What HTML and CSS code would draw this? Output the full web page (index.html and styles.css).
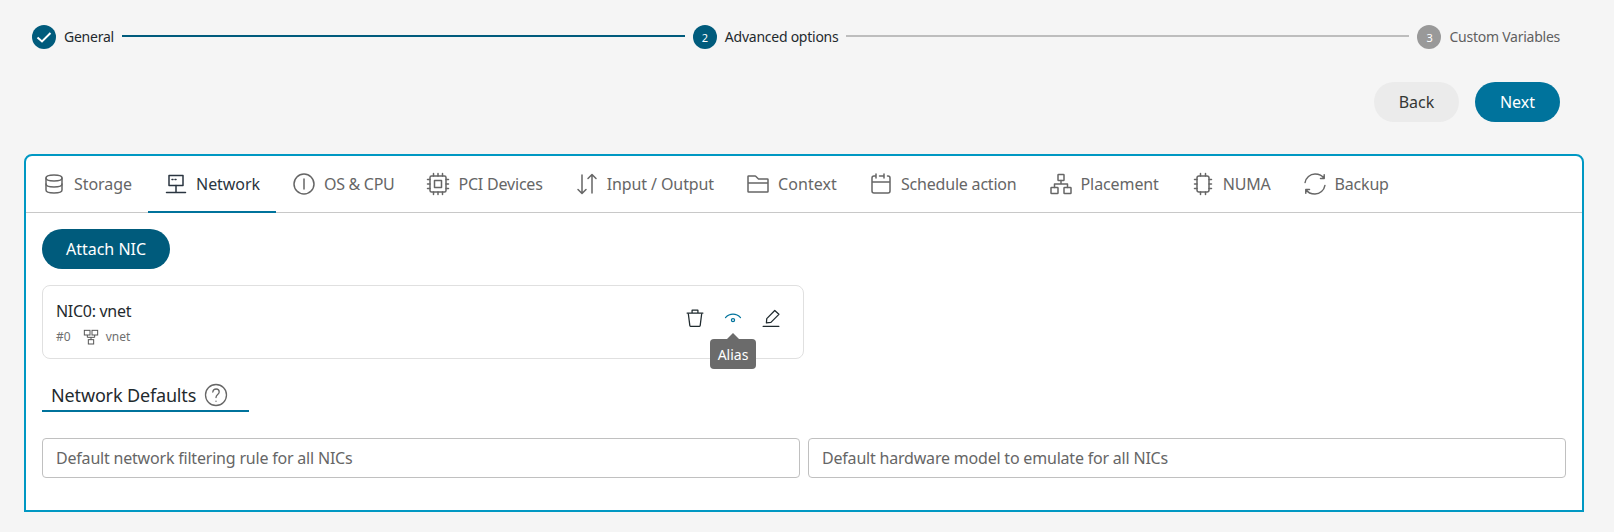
FILE: index.html
```html
<!DOCTYPE html>
<html lang="en">
<head>
<meta charset="utf-8">
<title>VM Template</title>
<link rel="stylesheet" href="styles.css">
</head>
<body>
<main class="page">
  <div class="stepper">
    <div class="step">
      <span class="step-dot"><svg viewBox="0 0 24 24" class="check"><path d="M5.500 12.500l4.500 4 8.500-8.500"/></svg></span>
      <span class="step-label">General</span>
    </div>
    <span class="step-line done"></span>
    <div class="step">
      <span class="step-dot">2</span>
      <span class="step-label">Advanced options</span>
    </div>
    <span class="step-line"></span>
    <div class="step off">
      <span class="step-dot">3</span>
      <span class="step-label">Custom Variables</span>
    </div>
  </div>

  <div class="actions">
    <button class="btn btn-back">Back</button>
    <button class="btn btn-next">Next</button>
  </div>

  <section class="panel">
    <nav class="tabs">
      <a class="tab ls-wide">
        <svg class="ico" viewBox="0 0 24 24"><path d="M4 6v12c0 2.200 3.600 3 8 3s8-.8 8-3V6"/><path d="M4 6c0-2.200 3.600-3 8-3s8 .8 8 3-3.600 3-8 3-8-.8-8-3z"/><path d="M4 12c0 2.200 3.600 3 8 3s8-.8 8-3"/></svg>
        <span>Storage</span>
      </a>
      <a class="tab active ls-wide">
        <svg class="ico" viewBox="0 0 24 24"><path d="M5 3.500h14v10H5z"/><path d="M12 13.500V20M2.500 20.500h19"/><path d="M8 7.500h1M11 7.500h1"/></svg>
        <span>Network</span>
      </a>
      <a class="tab ls-tight">
        <svg class="ico" viewBox="0 0 24 24"><circle cx="12" cy="12" r="10"/><path d="M12 7v10"/></svg>
        <span>OS &amp; CPU</span>
      </a>
      <a class="tab">
        <svg class="ico" viewBox="0 0 24 24"><rect x="4" y="4" width="16" height="16" rx="1.500"/><rect x="8.500" y="8.500" width="7" height="7"/><path d="M1.500 7.500H4M1.500 12H4M1.500 16.500H4M20 7.500h2.500M20 12h2.500M20 16.500h2.500M7.500 1.500V4M12 1.500V4M16.500 1.500V4M7.500 20v2.500M12 20v2.500M16.500 20v2.500"/></svg>
        <span>PCI Devices</span>
      </a>
      <a class="tab ls-mid">
        <svg class="ico" viewBox="0 0 24 24"><path d="M7 3v18M3 17.500l4 4 4-4"/><path d="M17 21V3M13 6.500l4-4 4 4"/></svg>
        <span>Input / Output</span>
      </a>
      <a class="tab ls-wider">
        <svg class="ico" viewBox="0 0 24 24"><path d="M2 11V4.600c0-.3.3-.6.600-.6h6.700c.2 0 .3.100.4.200L12.500 7h8.900c.3 0 .6.300.6.600V11M2 11v8.400c0 .3.300.6.600.6h18.800c.3 0 .6-.3.600-.6V11M2 11h20"/></svg>
        <span>Context</span>
      </a>
      <a class="tab">
        <svg class="ico" viewBox="0 0 24 24"><path d="M15 4V2m0 2v2m0-2h-4.500M3 10v9a2 2 0 002 2h14a2 2 0 002-2v-9H3zM3 10V6a2 2 0 012-2h2M7 2v4M21 10V6a2 2 0 00-2-2h-.5"/></svg>
        <span>Schedule action</span>
      </a>
      <a class="tab ls-mid">
        <svg class="ico" viewBox="0 0 24 24"><rect x="9" y="2.500" width="6" height="6" rx=".6"/><rect x="2" y="15.500" width="7" height="6" rx=".6"/><rect x="15" y="15.500" width="7" height="6" rx=".6"/><path d="M12 8.500V12M5.500 15.500V12h13v3.500"/></svg>
        <span>Placement</span>
      </a>
      <a class="tab">
        <svg class="ico" viewBox="0 0 24 24"><rect x="6" y="4" width="12" height="16" rx="2"/><path d="M3.500 7.500H6M3.500 12H6M3.500 16.500H6M18 7.500h2.500M18 12h2.500M18 16.500h2.500M9.500 1.500V4M14.500 1.500V4M9.500 20v2.500M14.500 20v2.500"/></svg>
        <span>NUMA</span>
      </a>
      <a class="tab">
        <svg class="ico" viewBox="0 0 24 24"><path d="M21.200 6.500V2.800M21.200 6.500h-3.700M21.200 6.500C19.400 3.800 15.900 2 12 2 7 2 2.900 5.700 2.100 10.500"/><path d="M2.800 17.500v3.700M2.800 17.500h3.700M2.800 17.500C4.600 20.200 8.100 22 12 22c5 0 9.100-3.700 9.900-8.500"/></svg>
        <span>Backup</span>
      </a>
    </nav>

    <div class="content">
      <button class="btn btn-attach">Attach NIC</button>

      <article class="card">
        <div class="card-info">
          <div class="card-title">NIC0: vnet</div>
          <div class="card-meta">
            <span class="meta-id">#0</span>
            <svg class="ico-small" viewBox="0 0 24 24"><rect x="2" y="2" width="8.500" height="7"/><rect x="13.500" y="2" width="8.500" height="7"/><rect x="8" y="16" width="8" height="6.500"/><path d="M6.500 9v3.500h11V9M12 12.500V16"/></svg>
            <span>vnet</span>
          </div>
        </div>
        <div class="card-actions">
          <button class="icon-btn"><svg viewBox="0 0 24 24"><path d="M4 7l1.800 14.100c0 .5.400.9.900.9h10.600c.5 0 .9-.4.900-.9L20 7"/><path d="M2.500 6h19M8.500 6V2.700c0-.1.100-.2.200-.2h6.600c.1 0 .2.100.2.200V6"/></svg></button>
          <button class="icon-btn teal"><svg viewBox="0 0 24 24"><path d="M3 11.500C5.500 8.700 8.500 7.300 12 7.300s6.500 1.400 9 4.200"/><circle cx="12" cy="14.500" r="1.900"/></svg></button>
          <button class="icon-btn"><svg viewBox="0 0 24 24"><path d="M2.500 22h19"/><path d="M6.500 17.800l.4-5L16.500 3l5 4.600-9.600 9.700z"/></svg></button>
          <div class="tooltip">Alias</div>
        </div>
      </article>

      <h2 class="section-title"><span>Network Defaults</span><svg class="help" viewBox="0 0 24 24"><circle cx="12" cy="12" r="10.500"/><path d="M8.800 9c.5-4 6.400-4 6.400 0 0 2.600-3.200 2.600-3.200 5.500"/><path d="M12 18.200v.1"/></svg></h2>

      <div class="fields">
        <input class="field" placeholder="Default network filtering rule for all NICs">
        <input class="field" placeholder="Default hardware model to emulate for all NICs">
      </div>
    </div>
  </section>
</main>
</body>
</html>
```
FILE: styles.css
```css
* { box-sizing: border-box; }
html, body { margin: 0; height: 100%; }
body {
  background: #f5f5f5;
  color: #353735;
  font-family: "Noto Sans", "Open Sans", sans-serif;
  overflow: hidden;
}
.page { padding: 25px 30px 0 24px; }

.stepper { display: flex; align-items: center; padding: 0 0 0 8px; height: 24px; margin-right: 24px; }
.step { display: flex; align-items: center; gap: 8px; font-size: 14px; letter-spacing: -.25px; color: #1f2a2e; }
.step.off { color: #5f6060; }
.step-label { margin-bottom: 2px; }
.step-dot {
  width: 24px; height: 24px; border-radius: 50%;
  background: #005b7c; color: #fff;
  display: flex; align-items: center; justify-content: center;
  font-size: 11px;
}
.step.off .step-dot { background: #999; }
.check { width: 24px; height: 24px; fill: none; stroke: #fff; stroke-width: 2; }
.step-line { flex: 1; height: 2px; background: #bdbdbd; margin: 0 8px 2px; }
.step-line.done { background: #005b7c; }

.actions { display: flex; justify-content: flex-end; gap: 16px; margin-top: 33px; margin-right: 24px; }
.btn { border: 0; border-radius: 20px; height: 40px; font: inherit; font-size: 16px; padding: 0; }
.btn-back { width: 85px; background: #ebebeb; color: #353735; }
.btn-next { width: 85px; background: #00739c; color: #fff; }

.panel {
  margin-top: 32px;
  height: 358px;
  background: #fff;
  border: 2px solid #0098c3;
  border-radius: 8px 8px 0 0;
}
.tabs { display: flex; height: 57px; border-bottom: 1px solid #c8c8c8; }
.tab {
  display: flex; align-items: center; gap: 8px;
  padding: 0 16px 1px; height: 56px;
  font-size: 16px; letter-spacing: -.2px; color: #666;
  position: relative;
}
.tab.ls-wide { letter-spacing: -.05px; }
.tab.ls-wider { letter-spacing: .08px; }
.tab.ls-mid { letter-spacing: -.1px; }
.tab.ls-tight { letter-spacing: -.3px; }
.tab.active { color: #2a3540; }
.tab.active::after {
  content: ""; position: absolute; left: 0; right: 0; bottom: -1px; height: 2px; background: #00739c;
}
.ico { width: 24px; height: 24px; flex: none; fill: none; stroke: currentColor; stroke-width: 1.500; stroke-linecap: round; stroke-linejoin: round; }

.content { padding: 16px 16px 0; }
.btn-attach { width: 128px; background: #005b7c; color: #fff; display: block; }

.card {
  margin-top: 16px; width: 762px; height: 74px;
  border: 1px solid #e0e0e0; border-radius: 8px;
  display: flex; justify-content: space-between;
  padding: 13px 12px 0 13px;
}
.card-title { font-size: 16px; letter-spacing: -.3px; color: #1f2a2e; line-height: 24px; }
.card-meta { display: flex; align-items: center; gap: 7px; font-size: 12px; color: #6f6f6f; margin-top: 5px; line-height: 18px; }
.meta-id { margin-right: 5px; }
.ico-small { width: 16px; height: 16px; fill: none; stroke: #555; stroke-width: 1.500; }
.card-actions { display: flex; gap: 18px; position: relative; height: 40px; margin-right: 10px; margin-top: -4px; }
.icon-btn { width: 20px; height: 20px; border: 0; background: none; padding: 0; margin-top: 13px; color: #1f2a2e; }
.icon-btn.teal { color: #00739c; }
.icon-btn svg { width: 20px; height: 20px; fill: none; stroke: currentColor; stroke-width: 1.500; stroke-linecap: round; stroke-linejoin: round; display: block; }
.tooltip {
  position: absolute; left: 25px; top: 44px; width: 46px; height: 30px;
  background: #6b6b6b; color: #fff; font-size: 14px; border-radius: 4px;
  display: flex; align-items: center; justify-content: center;
}
.tooltip::before {
  content: ""; position: absolute; left: 17px; top: -6px;
  border-left: 6px solid transparent; border-right: 6px solid transparent; border-bottom: 6px solid #6b6b6b;
}

.section-title {
  margin: 16px 0 0; width: 207px; height: 37px;
  display: flex; align-items: center; gap: 8px;
  padding: 5px 0 0 9px;
  font-size: 18px; letter-spacing: -.15px; font-weight: 400; color: #1f2a2e;
  border-bottom: 2px solid #00739c;
}
.help { width: 24px; height: 24px; fill: none; stroke: #666; stroke-width: 1.300; stroke-linecap: round; }

.fields { display: grid; grid-template-columns: 1fr 1fr; gap: 8px; margin-top: 26px; }
.field {
  height: 40px; border: 1px solid #c0c0c0; border-radius: 4px;
  padding: 0 13px; font: inherit; font-size: 16px; letter-spacing: -.2px; background: #fff; color: #555;
  min-width: 0;
}
.field::placeholder { color: #666; opacity: 1; }
```
